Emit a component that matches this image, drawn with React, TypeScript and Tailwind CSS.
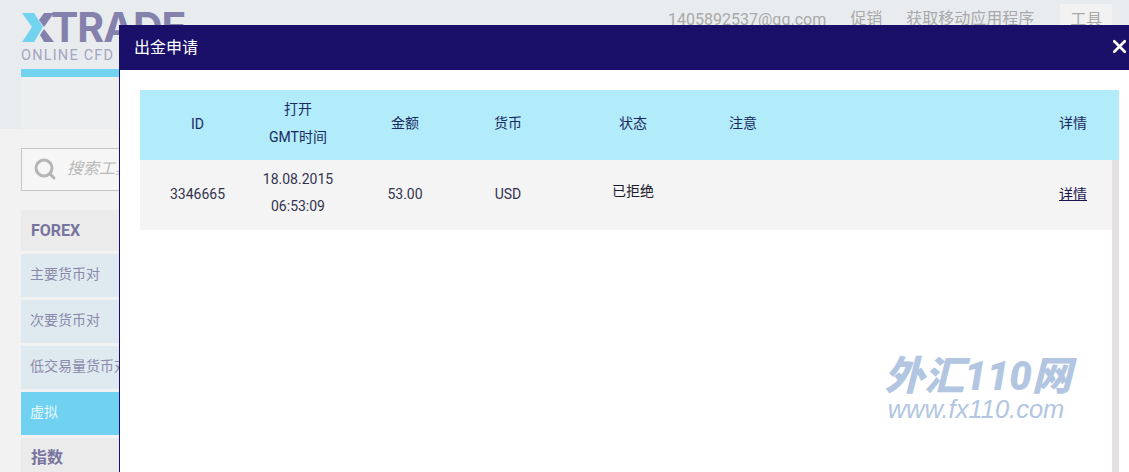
import React from 'react';
import { Search, X } from 'lucide-react';

const FONT = "font-['Roboto','Noto_Sans_CJK_SC',sans-serif]";

const sideItems = ['主要货币对', '次要货币对', '低交易量货币对'];
const rowGrid = 'grid items-center text-center';

const Logo: React.FC = () => (
  <div className="w-[99px]">
    <div className="flex items-center h-[31px]">
      <svg width="33" height="31" viewBox="0 0 33 31" className="shrink-0">
        <path d="M1 1h12l9 14-9 15H1l10-15z" fill="#72d3ee" />
        <path d="M33 1H23l-5 7 5 7z" fill="#8581ad" />
        <path d="M33 30H23l-4-7 4-6z" fill="#8581ad" />
      </svg>
      <span className="ml-[-3px] text-[41px] leading-none font-bold tracking-[-1px] text-[#8581ad] font-['Inter',sans-serif] whitespace-nowrap">
        TRADE
      </span>
    </div>
    <div className="mt-[4px] text-[14.5px] leading-[17px] tracking-[1.2px] text-[#a5a5bf] whitespace-nowrap">ONLINE CFD</div>
    <div className="mt-[5px] h-[8px] bg-[#72d3ee]" />
  </div>
);

const Sidebar: React.FC = () => (
  <div className="pl-[21px] pt-[19px] bg-[#f2f2f2] h-[343px] overflow-hidden">
    <div className="flex items-center h-[43px] w-[110px] pl-[11px] bg-[#f6f6f6] border border-[#c6c6c6]">
      <Search className="w-[24px] h-[24px] shrink-0 text-[#b5b5b5] mt-[-2px]" strokeWidth={3} />
      <span className="ml-[10px] mt-[-2px] text-[16px] italic text-[#b9b9b9] whitespace-nowrap">搜索工具</span>
    </div>
    <div className="mt-[19px] w-[98px] flex flex-col">
      <div className="h-[41px] flex items-center pl-[10px] bg-[#ebebeb] text-[16px] font-bold text-[#77749f]">FOREX</div>
      {sideItems.map((item) => (
        <div
          key={item}
          className="mt-[3px] h-[43px] flex items-center pl-[9px] pb-[3px] bg-[#deeaef] text-[14px] text-[#8b89ac] whitespace-nowrap overflow-hidden"
        >
          {item}
        </div>
      ))}
      <div className="mt-[3px] h-[43px] flex items-center pl-[9px] pb-[2px] bg-[#70d1f1] text-[14px] text-[#e6f7fc]">虚拟</div>
      <div className="mt-[3px] h-[41px] flex items-center pl-[10px] pb-[2px] bg-[#ebebeb] text-[16px] font-bold text-[#77749f]">指数</div>
    </div>
  </div>
);

const Modal: React.FC = () => (
  <div className="absolute left-[119px] top-[25px] right-0 bottom-0 flex flex-col bg-white border-l border-[#1a0f69]">
    <div className="relative h-[45px] flex items-center pl-[14px] bg-[#1a0f69] text-[16px] text-white">
      出金申请
      <X className="absolute right-[-1px] top-[11px] w-[21px] h-[21px] text-white" strokeWidth={3} />
    </div>
    <div className="flex flex-col flex-1 ml-[20px] mr-[10px] mt-[20px] min-h-0">
      <div className={`${rowGrid} grid-cols-[115px_86px_128px_78px_172px_48px_1fr_92px] h-[70px] pb-[4px] bg-[#b2ebf9] text-[14px] text-[#1a2a5e]`}>
        <div className="mt-[2px]">ID</div>
        <div className="leading-[28px]">
          打开
          <br />
          GMT时间
        </div>
        <div>金额</div>
        <div>货币</div>
        <div>状态</div>
        <div>注意</div>
        <div />
        <div>详情</div>
      </div>
      <div className="flex flex-1 min-h-0">
        <div className={`${rowGrid} grid-cols-[115px_86px_128px_78px_172px_48px_1fr_78px] flex-1 h-[70px] pb-[2px] bg-[#f4f4f5] text-[14px] text-[#33334d]`}>
          <div>3346665</div>
          <div className="mb-[2px] leading-[27px]">
            18.08.2015
            <br />
            06:53:09
          </div>
          <div>53.00</div>
          <div>USD</div>
          <div className="mt-[-5px] text-[#1c1c2e]">已拒绝</div>
          <div />
          <div />
          <div className="text-[#1a1450] underline">详情</div>
        </div>
        <div className="w-[7px] bg-[#e4e1e3]" />
      </div>
    </div>
    <div className="absolute left-[762px] top-[333px] w-[192px] flex flex-col items-center text-[#b2c6e2] italic">
      <div className="text-[40px] leading-[38px] font-black whitespace-nowrap">外汇110网</div>
      <div className="text-[25.5px] leading-[27px] mr-[4px] font-['Liberation_Sans',sans-serif] whitespace-nowrap">www.fx110.com</div>
    </div>
  </div>
);

export default function App() {
  return (
    <div className={`relative w-[1129px] h-[472px] overflow-hidden bg-[#f2f2f2] ${FONT}`}>
      <div className="flex h-[129px] bg-[#e9ecef]">
        <div className="pl-[21px] pt-[12px] w-[640px] flex flex-col">
          <Logo />
          <div className="flex-1 w-[99px] bg-[#eceef0]" />
        </div>
        <div className="flex-1 flex items-start pt-[4px] text-[16px] text-[#a9a9a9]">
          <span className="ml-[28px] mt-[4px] whitespace-nowrap">1405892537@qq.com</span>
          <span className="ml-[24px] mt-[3px] whitespace-nowrap">促销</span>
          <span className="ml-[24px] mt-[3px] whitespace-nowrap">获取移动应用程序</span>
          <span className="ml-[26px] px-[10px] pt-[4px] h-[31px] bg-[#f2f2f2] whitespace-nowrap">工具</span>
        </div>
      </div>
      <Sidebar />
      <Modal />
    </div>
  );
}
